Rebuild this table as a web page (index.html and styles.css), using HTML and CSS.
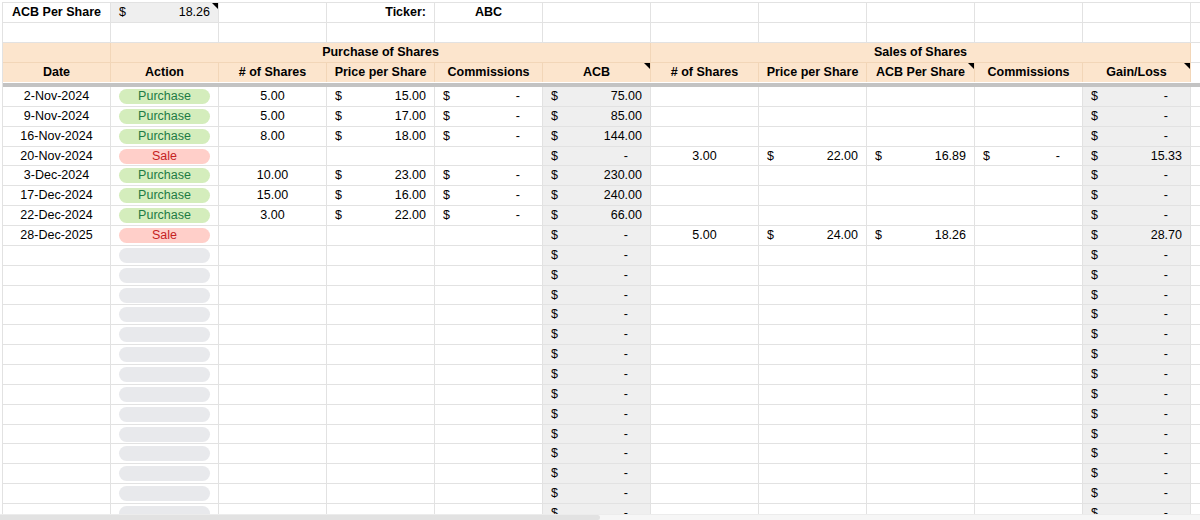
FILE: index.html
```html
<!DOCTYPE html>
<html>
<head>
<meta charset="utf-8">
<link rel="stylesheet" href="styles.css">
</head>
<body>
<div class="page">
  <div class="sheet">
    <div class="grid">
      <div class="row">
        <div class="c bold center">ACB Per Share</div>
        <div class="c acct calc note"><span>$</span><span>18.26</span></div>
        <div class="c"></div>
        <div class="c bold right">Ticker:</div>
        <div class="c bold center">ABC</div>
        <div class="c"></div><div class="c"></div><div class="c"></div><div class="c"></div><div class="c"></div><div class="c"></div><div class="c"></div>
      </div>
      <div class="row">
        <div class="c"></div><div class="c"></div><div class="c"></div><div class="c"></div><div class="c"></div><div class="c"></div><div class="c"></div><div class="c"></div><div class="c"></div><div class="c"></div><div class="c"></div><div class="c"></div>
      </div>
      <div class="row head">
        <div class="c"></div>
        <div class="c span5 bold center">Purchase of Shares</div>
        <div class="c span5 bold center">Sales of Shares</div>
        <div class="c plain"></div>
      </div>
      <div class="row head last">
        <div class="c bold center">Date</div>
        <div class="c bold center">Action</div>
        <div class="c bold center"># of Shares</div>
        <div class="c bold center">Price per Share</div>
        <div class="c bold center">Commissions</div>
        <div class="c bold center note">ACB</div>
        <div class="c bold center"># of Shares</div>
        <div class="c bold center">Price per Share</div>
        <div class="c bold center note">ACB Per Share</div>
        <div class="c bold center">Commissions</div>
        <div class="c bold center note">Gain/Loss</div>
        <div class="c plain"></div>
      </div>
      <div class="freeze"></div>

      <div class="row data">
        <div class="c center">2-Nov-2024</div>
        <div class="c"><span class="chip buy">Purchase</span></div>
        <div class="c center">5.00</div>
        <div class="c acct"><span>$</span><span>15.00</span></div>
        <div class="c acct"><span>$</span><span class="dash">-</span></div>
        <div class="c acct calc"><span>$</span><span>75.00</span></div>
        <div class="c"></div><div class="c"></div><div class="c"></div><div class="c"></div>
        <div class="c acct calc"><span>$</span><span class="dash">-</span></div>
        <div class="c"></div>
      </div>
      <div class="row data">
        <div class="c center">9-Nov-2024</div>
        <div class="c"><span class="chip buy">Purchase</span></div>
        <div class="c center">5.00</div>
        <div class="c acct"><span>$</span><span>17.00</span></div>
        <div class="c acct"><span>$</span><span class="dash">-</span></div>
        <div class="c acct calc"><span>$</span><span>85.00</span></div>
        <div class="c"></div><div class="c"></div><div class="c"></div><div class="c"></div>
        <div class="c acct calc"><span>$</span><span class="dash">-</span></div>
        <div class="c"></div>
      </div>
      <div class="row data">
        <div class="c center">16-Nov-2024</div>
        <div class="c"><span class="chip buy">Purchase</span></div>
        <div class="c center">8.00</div>
        <div class="c acct"><span>$</span><span>18.00</span></div>
        <div class="c acct"><span>$</span><span class="dash">-</span></div>
        <div class="c acct calc"><span>$</span><span>144.00</span></div>
        <div class="c"></div><div class="c"></div><div class="c"></div><div class="c"></div>
        <div class="c acct calc"><span>$</span><span class="dash">-</span></div>
        <div class="c"></div>
      </div>
      <div class="row data">
        <div class="c center">20-Nov-2024</div>
        <div class="c"><span class="chip sale">Sale</span></div>
        <div class="c"></div>
        <div class="c"></div>
        <div class="c"></div>
        <div class="c acct calc"><span>$</span><span class="dash">-</span></div>
        <div class="c center">3.00</div>
        <div class="c acct"><span>$</span><span>22.00</span></div>
        <div class="c acct"><span>$</span><span>16.89</span></div>
        <div class="c acct"><span>$</span><span class="dash">-</span></div>
        <div class="c acct calc"><span>$</span><span>15.33</span></div>
        <div class="c"></div>
      </div>
      <div class="row data">
        <div class="c center">3-Dec-2024</div>
        <div class="c"><span class="chip buy">Purchase</span></div>
        <div class="c center">10.00</div>
        <div class="c acct"><span>$</span><span>23.00</span></div>
        <div class="c acct"><span>$</span><span class="dash">-</span></div>
        <div class="c acct calc"><span>$</span><span>230.00</span></div>
        <div class="c"></div><div class="c"></div><div class="c"></div><div class="c"></div>
        <div class="c acct calc"><span>$</span><span class="dash">-</span></div>
        <div class="c"></div>
      </div>
      <div class="row data">
        <div class="c center">17-Dec-2024</div>
        <div class="c"><span class="chip buy">Purchase</span></div>
        <div class="c center">15.00</div>
        <div class="c acct"><span>$</span><span>16.00</span></div>
        <div class="c acct"><span>$</span><span class="dash">-</span></div>
        <div class="c acct calc"><span>$</span><span>240.00</span></div>
        <div class="c"></div><div class="c"></div><div class="c"></div><div class="c"></div>
        <div class="c acct calc"><span>$</span><span class="dash">-</span></div>
        <div class="c"></div>
      </div>
      <div class="row data">
        <div class="c center">22-Dec-2024</div>
        <div class="c"><span class="chip buy">Purchase</span></div>
        <div class="c center">3.00</div>
        <div class="c acct"><span>$</span><span>22.00</span></div>
        <div class="c acct"><span>$</span><span class="dash">-</span></div>
        <div class="c acct calc"><span>$</span><span>66.00</span></div>
        <div class="c"></div><div class="c"></div><div class="c"></div><div class="c"></div>
        <div class="c acct calc"><span>$</span><span class="dash">-</span></div>
        <div class="c"></div>
      </div>
      <div class="row data">
        <div class="c center">28-Dec-2025</div>
        <div class="c"><span class="chip sale">Sale</span></div>
        <div class="c"></div>
        <div class="c"></div>
        <div class="c"></div>
        <div class="c acct calc"><span>$</span><span class="dash">-</span></div>
        <div class="c center">5.00</div>
        <div class="c acct"><span>$</span><span>24.00</span></div>
        <div class="c acct"><span>$</span><span>18.26</span></div>
        <div class="c"></div>
        <div class="c acct calc"><span>$</span><span>28.70</span></div>
        <div class="c"></div>
      </div>

      <div class="row data"><div class="c"></div><div class="c"><span class="chip empty"></span></div><div class="c"></div><div class="c"></div><div class="c"></div><div class="c acct calc"><span>$</span><span class="dash">-</span></div><div class="c"></div><div class="c"></div><div class="c"></div><div class="c"></div><div class="c acct calc"><span>$</span><span class="dash">-</span></div><div class="c"></div></div>
      <div class="row data"><div class="c"></div><div class="c"><span class="chip empty"></span></div><div class="c"></div><div class="c"></div><div class="c"></div><div class="c acct calc"><span>$</span><span class="dash">-</span></div><div class="c"></div><div class="c"></div><div class="c"></div><div class="c"></div><div class="c acct calc"><span>$</span><span class="dash">-</span></div><div class="c"></div></div>
      <div class="row data"><div class="c"></div><div class="c"><span class="chip empty"></span></div><div class="c"></div><div class="c"></div><div class="c"></div><div class="c acct calc"><span>$</span><span class="dash">-</span></div><div class="c"></div><div class="c"></div><div class="c"></div><div class="c"></div><div class="c acct calc"><span>$</span><span class="dash">-</span></div><div class="c"></div></div>
      <div class="row data"><div class="c"></div><div class="c"><span class="chip empty"></span></div><div class="c"></div><div class="c"></div><div class="c"></div><div class="c acct calc"><span>$</span><span class="dash">-</span></div><div class="c"></div><div class="c"></div><div class="c"></div><div class="c"></div><div class="c acct calc"><span>$</span><span class="dash">-</span></div><div class="c"></div></div>
      <div class="row data"><div class="c"></div><div class="c"><span class="chip empty"></span></div><div class="c"></div><div class="c"></div><div class="c"></div><div class="c acct calc"><span>$</span><span class="dash">-</span></div><div class="c"></div><div class="c"></div><div class="c"></div><div class="c"></div><div class="c acct calc"><span>$</span><span class="dash">-</span></div><div class="c"></div></div>
      <div class="row data"><div class="c"></div><div class="c"><span class="chip empty"></span></div><div class="c"></div><div class="c"></div><div class="c"></div><div class="c acct calc"><span>$</span><span class="dash">-</span></div><div class="c"></div><div class="c"></div><div class="c"></div><div class="c"></div><div class="c acct calc"><span>$</span><span class="dash">-</span></div><div class="c"></div></div>
      <div class="row data"><div class="c"></div><div class="c"><span class="chip empty"></span></div><div class="c"></div><div class="c"></div><div class="c"></div><div class="c acct calc"><span>$</span><span class="dash">-</span></div><div class="c"></div><div class="c"></div><div class="c"></div><div class="c"></div><div class="c acct calc"><span>$</span><span class="dash">-</span></div><div class="c"></div></div>
      <div class="row data"><div class="c"></div><div class="c"><span class="chip empty"></span></div><div class="c"></div><div class="c"></div><div class="c"></div><div class="c acct calc"><span>$</span><span class="dash">-</span></div><div class="c"></div><div class="c"></div><div class="c"></div><div class="c"></div><div class="c acct calc"><span>$</span><span class="dash">-</span></div><div class="c"></div></div>
      <div class="row data"><div class="c"></div><div class="c"><span class="chip empty"></span></div><div class="c"></div><div class="c"></div><div class="c"></div><div class="c acct calc"><span>$</span><span class="dash">-</span></div><div class="c"></div><div class="c"></div><div class="c"></div><div class="c"></div><div class="c acct calc"><span>$</span><span class="dash">-</span></div><div class="c"></div></div>
      <div class="row data"><div class="c"></div><div class="c"><span class="chip empty"></span></div><div class="c"></div><div class="c"></div><div class="c"></div><div class="c acct calc"><span>$</span><span class="dash">-</span></div><div class="c"></div><div class="c"></div><div class="c"></div><div class="c"></div><div class="c acct calc"><span>$</span><span class="dash">-</span></div><div class="c"></div></div>
      <div class="row data"><div class="c"></div><div class="c"><span class="chip empty"></span></div><div class="c"></div><div class="c"></div><div class="c"></div><div class="c acct calc"><span>$</span><span class="dash">-</span></div><div class="c"></div><div class="c"></div><div class="c"></div><div class="c"></div><div class="c acct calc"><span>$</span><span class="dash">-</span></div><div class="c"></div></div>
      <div class="row data"><div class="c"></div><div class="c"><span class="chip empty"></span></div><div class="c"></div><div class="c"></div><div class="c"></div><div class="c acct calc"><span>$</span><span class="dash">-</span></div><div class="c"></div><div class="c"></div><div class="c"></div><div class="c"></div><div class="c acct calc"><span>$</span><span class="dash">-</span></div><div class="c"></div></div>
      <div class="row data"><div class="c"></div><div class="c"><span class="chip empty"></span></div><div class="c"></div><div class="c"></div><div class="c"></div><div class="c acct calc"><span>$</span><span class="dash">-</span></div><div class="c"></div><div class="c"></div><div class="c"></div><div class="c"></div><div class="c acct calc"><span>$</span><span class="dash">-</span></div><div class="c"></div></div>
      <div class="row data"><div class="c"></div><div class="c"><span class="chip empty"></span></div><div class="c"></div><div class="c"></div><div class="c"></div><div class="c acct calc"><span>$</span><span class="dash">-</span></div><div class="c"></div><div class="c"></div><div class="c"></div><div class="c"></div><div class="c acct calc"><span>$</span><span class="dash">-</span></div><div class="c"></div></div>
    </div>
  </div>
  <div class="hscroll"><div class="thumb"></div></div>
</div>
</body>
</html>
```

FILE: styles.css
```css
html, body {
  margin: 0;
  padding: 0;
  background: #ffffff;
}

body {
  font-family: "Liberation Sans", Arial, sans-serif;
  font-size: 12.5px;
  color: #000000;
}

.page {
  width: 1200px;
  height: 520px;
  overflow: hidden;
  display: flex;
  flex-direction: column;
}

.sheet {
  flex: 1;
  min-height: 0;
  overflow: hidden;
  padding: 2px 0 0 2px;
}

.grid {
  border-top: 1px solid #e2e2e2;
  border-left: 1px solid #e2e2e2;
  width: max-content;
}

.row {
  display: flex;
  height: 20px;
}

.row.data {
  height: 19.86px;
}

.c {
  position: relative;
  flex: none;
  width: 108px;
  box-sizing: border-box;
  border-right: 1px solid #e2e2e2;
  border-bottom: 1px solid #e2e2e2;
  padding: 0 8px;
  display: flex;
  align-items: center;
  white-space: nowrap;
  overflow: hidden;
  line-height: 15px;
}

.span5 {
  width: 540px;
}

.bold {
  font-weight: bold;
}

.center {
  justify-content: center;
}

.right {
  justify-content: flex-end;
}

.acct {
  justify-content: space-between;
}

.calc {
  background: #efefef;
}

.dash {
  padding-right: 14px;
}

.head .c {
  background: #fce5cd;
  border-right-color: #f2d6b8;
  border-bottom-color: #f2d6b8;
}

.head .c.plain {
  background: #ffffff;
  border-right-color: #e2e2e2;
  border-bottom-color: #e2e2e2;
}

.head.last .c {
  border-bottom: none;
  height: 19px;
}

.freeze {
  height: 4px;
  background: #c3c3c3;
}

.note::after {
  content: "";
  position: absolute;
  top: 0;
  right: 0;
  width: 0;
  height: 0;
  border-top: 6px solid #000000;
  border-left: 6px solid transparent;
}

.chip {
  display: block;
  width: 100%;
  height: 15px;
  line-height: 15px;
  border-radius: 8px;
  text-align: center;
  font-size: 12.5px;
}

.chip.buy {
  background: #d4edbc;
  color: #1e7b45;
}

.chip.sale {
  background: #ffcfc9;
  color: #c5221f;
}

.chip.empty {
  background: #e8e9ec;
}

.hscroll {
  height: 5px;
  flex: none;
  background: #f6f6f6;
  border-top: 1px solid #ececec;
  display: flex;
}

.thumb {
  width: 600px;
  background: #e2e2e2;
  border-radius: 0 3px 3px 0;
}
```
